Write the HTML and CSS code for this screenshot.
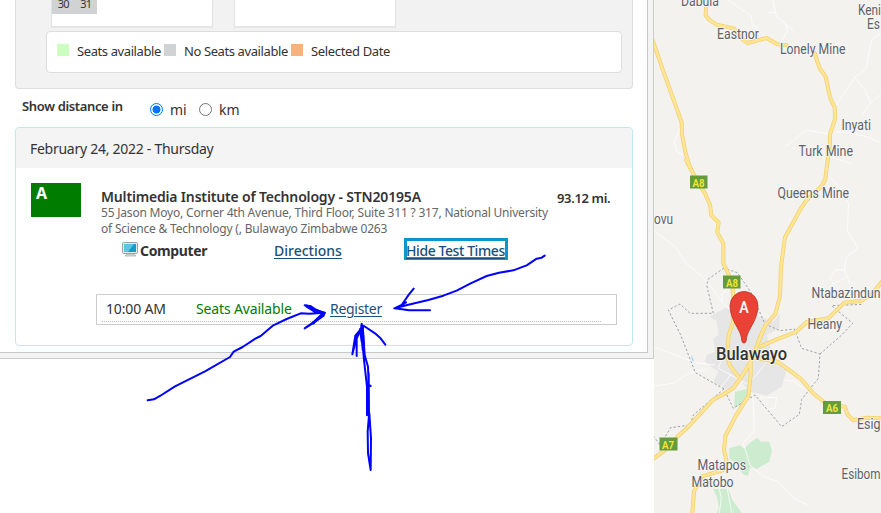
FILE: index.html
```
<!DOCTYPE html>
<html lang="en">
<head>
<meta charset="utf-8">
<title>Test Center Search</title>
<link rel="stylesheet" href="styles.css">
</head>
<body>
<div class="page">
  <main class="left">
    <div class="frame"><div class="content">
      <section class="calendar">
        <div class="months">
          <div class="month"><div class="days"><span>30</span><span>31</span></div></div>
          <div class="month"></div>
        </div>
        <div class="legend">
          <i class="swatch open"></i><span class="l1">Seats available</span>
          <i class="swatch full"></i><span class="l2">No Seats available</span>
          <i class="swatch picked"></i><span class="l3">Selected Date</span>
        </div>
      </section>
      <div class="distance">
        <b>Show distance in</b>
        <i class="radio on"></i><span class="unit">mi</span>
        <i class="radio"></i><span class="unit">km</span>
      </div>
      <section class="results">
        <h2><span>February 24, 2022 - Thursday</span></h2>
        <div class="center">
          <div class="badge">A</div>
          <div class="info">
            <h3>Multimedia Institute of Technology - STN20195A</h3>
            <p class="a1">55 Jason Moyo, Corner 4th Avenue, Third Floor, Suite 311 ? 317, National University</p>
            <p class="a2">of Science &amp; Technology (, Bulawayo Zimbabwe 0263</p>
            <div class="actions">
              <svg class="pc" width="17" height="15" viewBox="0 0 17 15"><rect x=".5" y=".5" width="15" height="11" rx="1" fill="#e5e9ea" stroke="#9aa2a6"/><path d="M2 2h12v8H2z" fill="#159bc9"/><path d="M2 2h10L6 10H2z" fill="#5cc6e2"/><path d="M5 12h7l2 2H3z" fill="#d7dcdf" stroke="#a2a8ab" stroke-width=".7"/></svg>
              <b class="computer">Computer</b>
              <a class="directions">Directions</a>
              <a class="hide">Hide Test Times</a>
            </div>
          </div>
          <div class="miles">93.12 mi.</div>
        </div>
        <div class="times"><div class="slot"><span class="hour">10:00 AM</span><span class="seats">Seats Available</span><a class="register">Register</a></div></div>
      </section>
    </div></div>
  </main>
  <svg class="map" width="227" height="513" viewBox="654 0 227 513">
    <rect x="654" width="227" height="513" fill="#f3f2ee"/>
    <g transform="translate(650 335) scale(.33333)" fill="#e6e6e6">
      <path d="M205 0L200 -42L180 -55L205 -70L230 -82L260 -60L330 -55L370 -40L390 -65L388 -20L350 0L375 75L410 105L395 155L350 182L300 170L270 135L250 160L220 162L190 140L205 110L165 80L170 60L195 50L190 10Z"/>
      <g fill="#cdebcf"><path d="M255 170L292 162L290 190L268 212L252 217Z"/><path d="M238 340L270 330L282 342L302 322L322 308L332 320L357 320L366 345L358 380L320 402L300 397L294 423L278 418L265 390L238 370Z"/><path d="M190 462L235 462L247 494L275 534H200L207 520L202 490Z"/></g>
      <path d="M123 60l6 8 3 13-6-5z" fill="#a8daf5"/>
    </g>
    <g fill="none" stroke="#fff" stroke-width="3" stroke-linejoin="round" stroke-opacity=".75">
      <path transform="translate(650 0) scale(.33333)" d="M235 0L303 48L306 70L345 108M368 0L376 35L380 50L407 72L413 92L390 130M355 38L376 36M407 74L432 92M693 98L665 120L648 205L615 232L565 305L553 325M615 232L645 270L662 308L693 283M662 308L637 345M557 395L605 400L650 410L688 426M405 440L440 413L470 390L535 402M92 380L73 425L82 457L98 463M540 470L605 491"/>
      <path transform="translate(650 160) scale(.33333)" d="M12 213L75 260L108 310L155 348L190 388L214 425L238 447M530 42L575 90L596 130L592 213L624 264L590 290L583 330L600 370M585 330L555 330L540 355L550 373L590 350M237 385L216 402L218 425"/>
      <path transform="translate(650 335) scale(.33333)" d="M12 36L60 54L140 84L195 90M12 153L70 145L115 115L170 102M210 160L242 120L205 100L212 80M238 118L292 147L320 120L350 80M309 184L313 285L280 325L300 390L340 424L382 440L440 495L475 510M330 187L380 188L375 220L350 222L332 187M208 462L214 490L208 534M232 462L245 534M400 135L430 138L460 160"/>
    </g>
    <path fill="none" stroke="#96999e" stroke-width="2.700" stroke-dasharray="7 6" transform="translate(650 160) scale(.33333)" d="M222 324L175 357L170 375L190 460H120L90 432L55 450L92 525L136 638L222 687L250 745L315 705L395 800L448 763L455 718L505 655L510 582L455 565L433 507L390 512L345 492L302 395L262 338ZM510 582L575 525L608 490L545 437L640 433M222 687L130 765L120 795L62 803L30 855L12 830"/>
    <defs>
      <g id="roads">
        <path transform="translate(650 0) scale(.33333)" d="M168 24L167 45L177 59L200 74L252 86L280 120L292 129L350 114L382 133L410 136M494 160L509 205L527 230L540 292L554 322L555 357L540 403L539 440L529 510L526 538L515 558L470 600L453 625L405 712L393 800L390 888L376 942L347 975L325 1025M5 112L37 205L95 367L96 402L107 460L122 508"/>
        <path transform="translate(650 160) scale(.33333)" d="M108 0L145 68L165 100L180 135L184 166L206 187L202 217L220 251L220 310L246 365L250 410V485L236 525L232 590L240 617L265 650M700 360L665 403L635 422L583 428L535 475L470 486L438 516L380 538L330 560"/>
        <path transform="translate(650 335) scale(.33333)" d="M12 370L52 340L84 303L110 280L190 194L222 177L250 159L275 125L302 80L318 40L335 -5M302 70L302 120L295 183L258 242L226 303L222 345L230 380L220 405L156 424L132 470L127 534M300 65L382 80L415 103L453 132L492 177L530 207L585 215L592 238L610 256L650 248L693 250"/>
      </g>
    </defs>
    <g fill="none" stroke-linejoin="round" stroke-linecap="round">
      <use href="#roads" stroke="#f3d06c" stroke-width="12"/>
      <use href="#roads" stroke="#ffe598" stroke-width="7.500"/>
    </g>
    <g fill="#649b3d"><rect x="690" y="175.500" width="17.500" height="13"/><rect x="723" y="275.500" width="17.500" height="13"/><rect x="823" y="401" width="18" height="13"/><rect x="659.500" y="437.500" width="18" height="13"/></g>
    <g class="shield"><text x="692.500" y="186.500" textLength="12" lengthAdjust="spacingAndGlyphs">A8</text><text x="726" y="286.500" textLength="12" lengthAdjust="spacingAndGlyphs">A8</text><text x="826" y="412" textLength="12" lengthAdjust="spacingAndGlyphs">A6</text><text x="662" y="448.500" textLength="12" lengthAdjust="spacingAndGlyphs">A7</text></g>
    <g class="places">
      <text x="681" y="6" textLength="38" lengthAdjust="spacingAndGlyphs">Dabula</text>
      <text x="717" y="39" textLength="42" lengthAdjust="spacingAndGlyphs">Eastnor</text>
      <text x="780" y="53.500" textLength="65.500" lengthAdjust="spacingAndGlyphs">Lonely Mine</text>
      <text x="858" y="14.500" textLength="23" lengthAdjust="spacingAndGlyphs">Keni</text>
      <text x="867" y="29" textLength="13" lengthAdjust="spacingAndGlyphs">Es</text>
      <text x="841.500" y="129.500" textLength="29.500" lengthAdjust="spacingAndGlyphs">Inyati</text>
      <text x="798.500" y="156" textLength="54.500" lengthAdjust="spacingAndGlyphs">Turk Mine</text>
      <text x="777.500" y="197.500" textLength="71.500" lengthAdjust="spacingAndGlyphs">Queens Mine</text>
      <text x="654" y="224" textLength="19" lengthAdjust="spacingAndGlyphs">ovu</text>
      <text x="811.500" y="297.500" textLength="69" lengthAdjust="spacingAndGlyphs">Ntabazindun</text>
      <text x="807.500" y="329" textLength="34.500" lengthAdjust="spacingAndGlyphs">Heany</text>
      <text x="857" y="429" textLength="23.500" lengthAdjust="spacingAndGlyphs">Esig</text>
      <text x="841.500" y="479" textLength="39" lengthAdjust="spacingAndGlyphs">Esibom</text>
      <text x="697.500" y="469.500" textLength="48.500" lengthAdjust="spacingAndGlyphs">Matapos</text>
      <text x="691.500" y="486.500" textLength="42" lengthAdjust="spacingAndGlyphs">Matobo</text>
      <text class="city" x="716" y="360" textLength="71" lengthAdjust="spacingAndGlyphs">Bulawayo</text>
    </g>
    <path d="M744 343c-2 0-2.200-2-2.500-5c-.8-8-11.500-18-11.500-32a14 14.500 0 0 1 28 0c0 14-10.700 24-11.500 32c-.3 3-.5 5-2.500 5z" fill="#ea4335" stroke="#b83228" stroke-width=".8"/>
    <text class="pin" x="739.300" y="312.500" textLength="9.500" lengthAdjust="spacingAndGlyphs">A</text>
  </svg>
  <svg class="ink" width="881" height="513" viewBox="0 0 881 513" fill="none" stroke="#00f" stroke-linejoin="round" stroke-linecap="round">
    <g transform="translate(130 290) scale(.33333)" stroke-width="6"><path d="M53 331L72 328L90 318L135 289L225 244L300 201L311 185L338 171L376 146L392 138L430 106L470 87L512 70L538 71L585 68M524 46L543 49L556 59L584 69L580 78L548 100L524 115L580 76M530 50L555 66L583 68L550 101"/>
    <path d="M695 101L697 150L702 210L711 290L711 376M698 108L704 195L714 230L716 285L722 288M716 250L717 375L713 425L714 489L722 540M718 370L723 445L722 540M667 193L676 137L692 118L678 150L667 193M698 120L695 155L690 117L702 108L735 130L750 143L766 164M680 134L680 198"/><path d="M696 108L700 178" stroke-width="10"/><path d="M530 48L580 70L550 98" stroke-width="8"/></g>
    <path transform="translate(320 165) scale(.33333)" stroke-width="6" d="M674 272L665 278L650 281L620 301L580 316L537 323L500 333L452 355L410 377L370 392L325 405L265 419L223 430L245 420L267 388L281 371M223 430L241 432L267 436H330M235 426L258 412"/>
  </svg>
</div>
</body>
</html>
```
FILE: styles.css
```
* { box-sizing: border-box; }
body { margin: 0; background: #fff; font: 14px/20px "Noto Sans", sans-serif; color: #333; }
h2, h3, p { margin: 0; white-space: nowrap; }
i { display: block; }
a { color: #1c4f7c; text-decoration: underline; text-underline-offset: 2px; }
.page { position: relative; display: flex; width: 881px; height: 513px; overflow: hidden; }
.left { width: 654px; flex: none; }
.frame { height: 359px; padding: 0 5px 5px 0; border: solid #ccc; border-width: 0 1px 1px 0; background: #f3f3f3; }
.content { height: 353px; padding: 0 14px 0 15px; border: solid #c8c8c8; border-width: 0 1px 1px 0; background: #fff; }
.calendar { width: 618px; height: 89px; padding: 0 11px 0 31px; background: #f2f2f2; border: 1px solid #ddd; border-top: 0; border-radius: 0 0 4px 4px; }
.months { display: flex; gap: 21px; padding-left: 4px; height: 31px; }
.month { width: 162px; height: 27px; background: #fff; border: 1px solid #e2e2e2; border-top: 0; box-shadow: 0 1px 1px #e8e8e8; }
.days { display: flex; width: 45px; height: 14px; background: #d1d2d4; font-size: 11px; line-height: 8px; }
.days span { width: 23px; text-align: center; letter-spacing: -.7px; }
.legend { display: flex; align-items: center; width: 576px; height: 42px; margin-left: -1px; padding: 0 10px 2px; background: #fff; border: 1px solid #ddd; border-radius: 4px; font-size: 13px; white-space: nowrap; }
.swatch { width: 12px; height: 12px; flex: none; margin: -2px 8px 0 0; }
.open { background: #ccffc0; }
.full { background: #d1d2d4; }
.picked { background: #fab27b; }
.l1 { width: 87px; letter-spacing: -.4px; }
.l2 { width: 107px; letter-spacing: -.4px; }
.l3 { letter-spacing: -.35px; }
.distance { display: flex; align-items: center; height: 38px; padding-left: 7px; white-space: nowrap; }
.distance b { width: 128px; padding-bottom: 4px; font-size: 13px; font-weight: 600; letter-spacing: -.35px; }
.radio { width: 13px; height: 13px; margin-top: 3px; border: 1px solid #767676; border-radius: 50%; }
.radio.on { border-color: #0075ff; background: radial-gradient(circle, #0075ff 3.700px, #fff 4.300px); }
.unit { width: 29px; margin-left: 7px; padding-top: 4px; }
.results { width: 618px; height: 219px; border: 1px solid #bde8f0; border-radius: 4px; background: #fff; overflow: hidden; }
h2 { height: 40px; padding: 11px 14px; background: #f4f4f4; font-size: 14px; font-weight: 400; letter-spacing: -.27px; }
.center { display: flex; height: 126px; padding: 15px 15px 0; }
.badge { width: 50px; height: 34px; padding-left: 5px; background: #007c00; color: #fff; font-weight: 700; font-size: 16px; line-height: 21px; }
.info { width: 456px; padding: 5px 0 0 20px; }
h3 { font-size: 14px; line-height: 18px; font-weight: 600; letter-spacing: -.17px; }
p { color: #666; font-size: 12px; line-height: 16px; letter-spacing: -.2px; }
.a1 { margin-top: -1px; }
.actions { display: flex; height: 24px; margin-top: 1px; padding-left: 21px; font-weight: 600; white-space: nowrap; }
.pc { margin-top: 4px; }
.computer { width: 134px; margin-left: 1px; padding-top: 3px; font-weight: 700; letter-spacing: -.35px; }
.directions { width: 130px; padding-top: 3px; font-weight: 500; }
.hide { width: 104px; height: 22px; padding-top: 1px; border: 3px solid #0b97cc; line-height: 17px; font-weight: 500; letter-spacing: -.42px; text-indent: -1px; }
.miles { margin-top: 5px; padding-left: 20px; font-size: 13px; font-weight: 600; letter-spacing: -.35px; white-space: nowrap; }
.times { width: 521px; height: 31px; margin-left: 80px; padding: 0 15px 0 5px; border: 1px solid #ccc; }
.slot { display: flex; height: 27px; padding: 4px 0 0 4px; border-bottom: 1px dotted #bbb; white-space: nowrap; letter-spacing: -.15px; }
.hour { width: 90px; }
.seats { width: 134px; color: #007c00; }
.register { letter-spacing: -.3px; }
.map { flex: none; display: block; }
.map text { font-family: Roboto, sans-serif; }
.places { font-size: 14.500px; fill: #5e6268; stroke: #f8f8f6; stroke-width: 1.500px; paint-order: stroke; }
.places .city { font-size: 18.500px; font-weight: 500; fill: #333; }
.shield { font-size: 11.500px; font-weight: 700; fill: #f4e532; }
.map .pin { font-size: 16px; font-weight: 500; fill: #fff; }
.ink { position: absolute; left: 0; top: 0; }
```
